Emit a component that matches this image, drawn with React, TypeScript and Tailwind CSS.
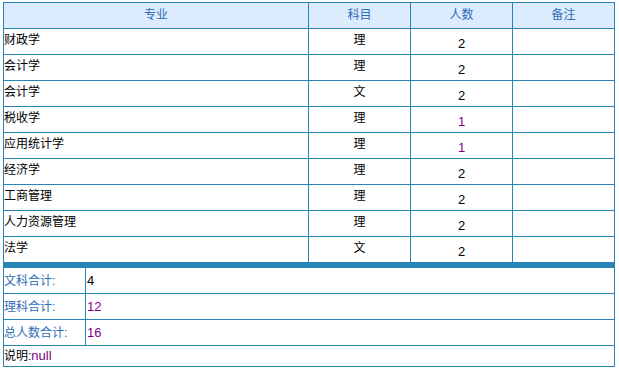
import React from "react";

const rows: [string, string, string, boolean][] = [
  ["财政学", "理", "2", false],
  ["会计学", "理", "2", false],
  ["会计学", "文", "2", false],
  ["税收学", "理", "1", true],
  ["应用统计学", "理", "1", true],
  ["经济学", "理", "2", false],
  ["工商管理", "理", "2", false],
  ["人力资源管理", "理", "2", false],
  ["法学", "文", "2", false],
];

const font = { fontFamily: '"Liberation Sans", "Noto Sans CJK SC", sans-serif' };

export default function App() {
  return (
    <div className="bg-white w-[619px] h-[370px] pt-[2px] pl-[3px] text-[12px] text-black" style={font}>
      <div className="w-[612px] border border-[#2786b6]">
        <div className="flex h-[26px] border-b border-[#2786b6] bg-[#dcebfd] text-[#2f6db7]">
          <div className="w-[304px] flex items-center justify-center pb-[2px]">专业</div>
          <div className="w-[102px] border-l border-[#2786b6] flex items-center justify-center pb-[2px]">科目</div>
          <div className="w-[102px] border-l border-[#2786b6] flex items-center justify-center pb-[2px]">人数</div>
          <div className="w-[102px] border-l border-[#2786b6] flex items-center justify-center pb-[2px]">备注</div>
        </div>
        {rows.map(([name, subj, n, purple], i) => (
          <div
            key={i}
            className={
              i === rows.length - 1
                ? "flex h-[25px]"
                : "flex h-[26px] border-b border-[#2786b6]"
            }
          >
            <div className="w-[304px] flex items-center pb-[3px]">{name}</div>
            <div className="w-[102px] border-l border-[#2786b6] flex items-center justify-center pb-[3px]">{subj}</div>
            <div
              className={
                purple
                  ? "w-[102px] border-l border-[#2786b6] flex items-center justify-center pt-[4px] text-[13px] text-[#800080]"
                  : "w-[102px] border-l border-[#2786b6] flex items-center justify-center pt-[4px] text-[13px]"
              }
            >
              {n}
            </div>
            <div className="w-[102px] border-l border-[#2786b6]"></div>
          </div>
        ))}
        <div className="h-[6px] bg-[#2786b6]"></div>
        <div className="flex h-[26px] border-b border-[#2786b6]">
          <div className="w-[81px] flex items-center text-[#2f6db7]">文科合计:</div>
          <div className="flex-1 border-l border-[#2786b6] flex items-center pl-[1px] text-[13px]">4</div>
        </div>
        <div className="flex h-[26px] border-b border-[#2786b6]">
          <div className="w-[81px] flex items-center text-[#2f6db7]">理科合计:</div>
          <div className="flex-1 border-l border-[#2786b6] flex items-center pl-[1px] text-[13px] text-[#800080]">12</div>
        </div>
        <div className="flex h-[26px] border-b border-[#2786b6]">
          <div className="w-[81px] flex items-center text-[#2f6db7]">总人数合计:</div>
          <div className="flex-1 border-l border-[#2786b6] flex items-center pl-[1px] text-[13px] text-[#800080]">16</div>
        </div>
        <div className="flex h-[20px] items-center">
          <span>说明:</span>
          <span className="text-[#800080] text-[13px]">null</span>
        </div>
      </div>
    </div>
  );
}
